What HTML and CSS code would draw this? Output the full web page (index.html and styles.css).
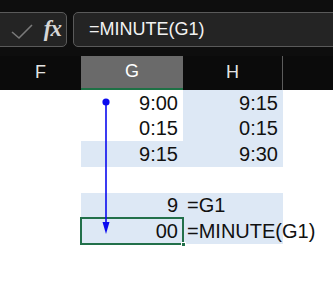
FILE: index.html
```html
<!DOCTYPE html>
<html lang="ja">
<head>
    <meta charset="UTF-8">
    <title>MINUTE</title>
    <link rel="stylesheet" href="styles.css">
</head>
<body>

<!-- Barra de fórmulas -->
<div class="formula-bar">
    <div class="name-box">
        <svg class="check" width="24" height="18" viewBox="0 0 24 18">
            <polyline points="1,10 8,16 21,3" fill="none" stroke="#7a7a7a" stroke-width="1.6"/>
        </svg>
        <span class="fx">fx</span>
    </div>
    <div class="formula-box">=MINUTE(G1)</div>
</div>

<!-- Encabezados de columna -->
<div class="col-heads">
    <div class="head col-f">F</div>
    <div class="head col-g active">G</div>
    <div class="head col-h">H</div>
    <div class="head col-i"></div>
</div>

<!-- Celdas -->
<div class="sheet">
    <div class="row r26">
        <div class="cell col-f"></div>
        <div class="cell col-g num">9:00</div>
        <div class="cell col-h num blue">9:15</div>
    </div>
    <div class="row r25">
        <div class="cell col-f"></div>
        <div class="cell col-g num">0:15</div>
        <div class="cell col-h num blue">0:15</div>
    </div>
    <div class="row r26">
        <div class="cell col-f"></div>
        <div class="cell col-g num blue">9:15</div>
        <div class="cell col-h num blue">9:30</div>
    </div>
    <div class="row r26">
        <div class="cell col-f"></div>
        <div class="cell col-g"></div>
        <div class="cell col-h"></div>
    </div>
    <div class="row r25">
        <div class="cell col-f"></div>
        <div class="cell col-g num blue">9</div>
        <div class="cell col-h text blue">=G1</div>
    </div>
    <div class="row r26">
        <div class="cell col-f"></div>
        <div class="cell col-g num blue selected">00<span class="handle"></span></div>
        <div class="cell col-h text blue">=MINUTE(G1)</div>
    </div>

    <!-- Flecha de referencia -->
    <svg class="arrow" width="20" height="150" viewBox="0 0 20 150">
        <circle cx="10" cy="12" r="3.6" fill="#0b0bef"/>
        <line x1="10" y1="12" x2="10" y2="134" stroke="#0b0bef" stroke-width="1.6"/>
        <polygon points="6.5,132 13.5,132 10,144" fill="#0b0bef"/>
    </svg>
</div>

</body>
</html>
```

FILE: styles.css
```css
* { box-sizing: border-box; }
body { margin: 0; background: #fff; font-family: "Liberation Sans", Arial, sans-serif; width: 333px; height: 287px; overflow: hidden; }

/* Barra de fórmulas */
.formula-bar { display: flex; gap: 6px; height: 56px; background: #0e0e0e; padding-top: 12px; padding-bottom: 9px; }
.name-box { width: 75px; flex: none; margin-left: -8px; display: flex; align-items: center; justify-content: flex-end; gap: 9px; padding-right: 5px; background: #242424; border: 1px solid #5a5a5a; border-radius: 5px; }
.check { margin-top: 2px; }
.fx { font-family: "Liberation Serif", serif; font-style: italic; font-weight: bold; font-size: 23px; color: #d6d6d6; letter-spacing: -1px; line-height: 1; margin-bottom: 3px; }
.formula-box { flex: 1; margin-right: -10px; display: flex; align-items: center; padding-left: 15px; background: #242424; border: 1px solid #5a5a5a; border-radius: 5px; color: #f2f2f2; font-size: 18px; }

/* Encabezados */
.col-heads { display: flex; height: 34px; background: #0b0b0b; }
.head { display: flex; align-items: center; justify-content: center; color: #e4e4e4; font-size: 18px; padding-bottom: 1px; }
.head.active { background: #6a6a6a; color: #fff; border-bottom: 2px solid #1e7145; }
.head.col-h { border-right: 1px solid #5c5c5c; }
.col-f { width: 81px; }
.col-g { width: 102px; }
.col-h { width: 100px; }
.col-i { width: 50px; }

/* Hoja */
.sheet { position: relative; }
.row { display: flex; font-size: 20px; color: #111; }
.r26 { height: 26px; }
.r25 { height: 25px; }
.cell { display: flex; align-items: center; white-space: nowrap; }
.cell.num { justify-content: flex-end; padding-right: 5px; }
.cell.text { padding-left: 4px; overflow: visible; }
.blue { background: #dde8f5; }
.selected { position: relative; outline: 2px solid #22704a; outline-offset: -1px; }
.handle { position: absolute; right: -3px; bottom: -3px; width: 5px; height: 5px; background: #22704a; border: 1px solid #fff; }
.arrow { position: absolute; left: 96px; top: 0; }
```
